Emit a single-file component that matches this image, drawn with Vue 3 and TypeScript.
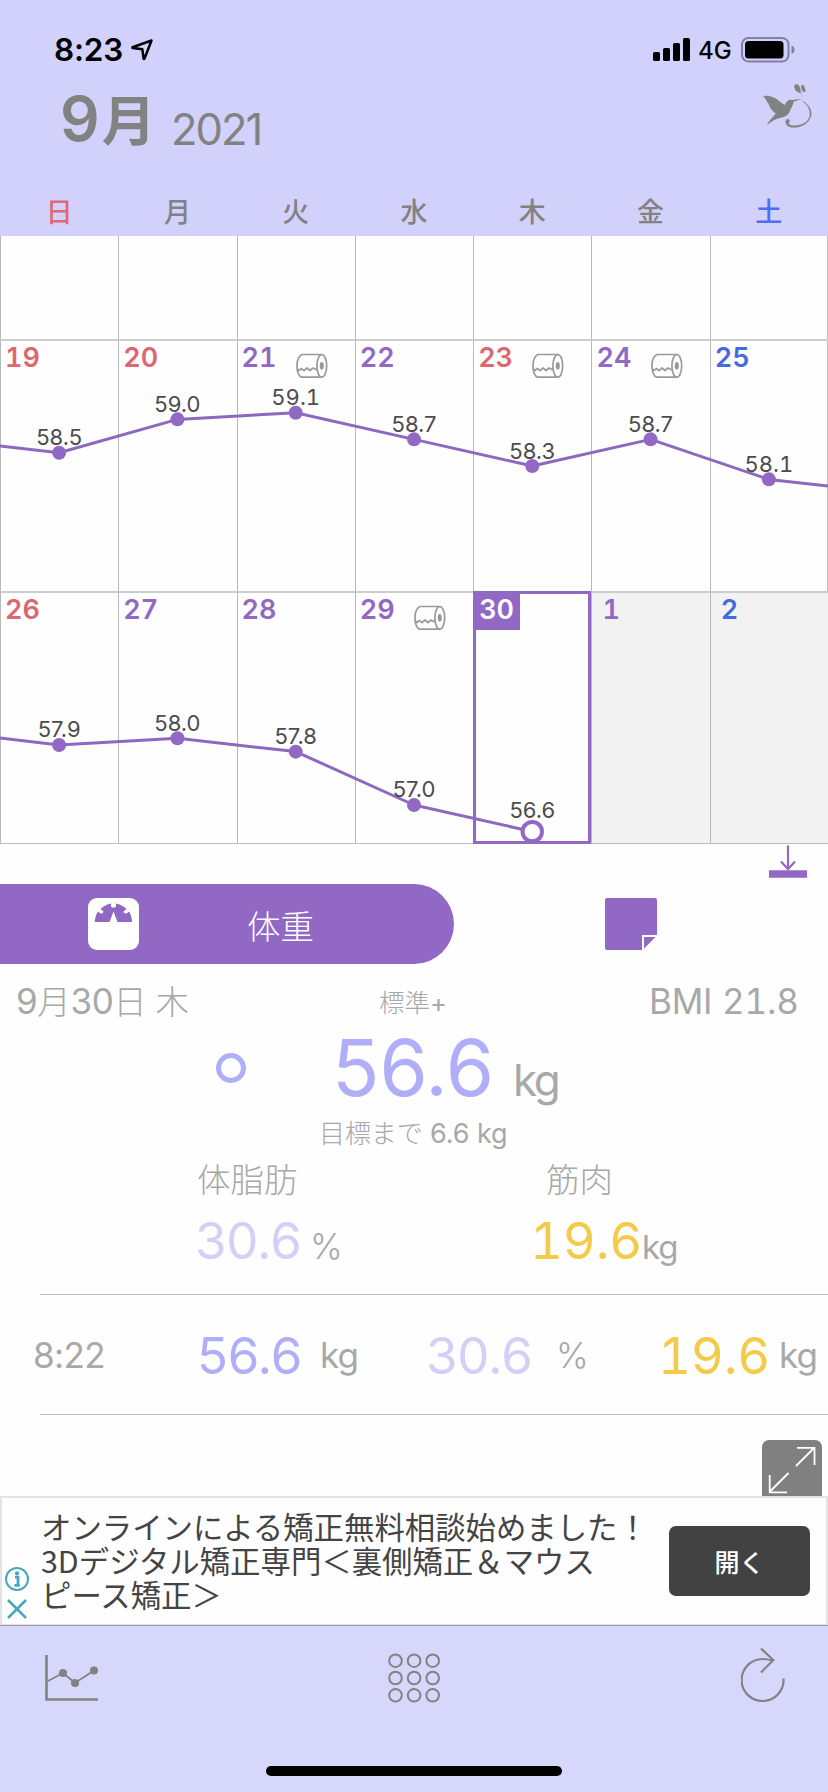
<script setup lang="ts">
interface Day {
  n: number
  tone: 'red' | 'purple' | 'blue'
  weight?: number
  roll?: boolean
  today?: boolean
  next?: boolean
}

interface Week {
  days: Day[]
  base: number
  line: string
}

const weekdays = ['日', '月', '火', '水', '木', '金', '土']
const cell = 828 / 7

const first: Day[] = [
  { n: 19, tone: 'red', weight: 58.5 },
  { n: 20, tone: 'red', weight: 59.0 },
  { n: 21, tone: 'purple', weight: 59.1, roll: true },
  { n: 22, tone: 'purple', weight: 58.7 },
  { n: 23, tone: 'red', weight: 58.3, roll: true },
  { n: 24, tone: 'purple', weight: 58.7, roll: true },
  { n: 25, tone: 'blue', weight: 58.1 },
]
const second: Day[] = [
  { n: 26, tone: 'red', weight: 57.9 },
  { n: 27, tone: 'purple', weight: 58.0 },
  { n: 28, tone: 'purple', weight: 57.8 },
  { n: 29, tone: 'purple', weight: 57.0, roll: true },
  { n: 30, tone: 'purple', weight: 56.6, today: true },
  { n: 1, tone: 'purple', next: true },
  { n: 2, tone: 'blue', next: true },
]

const px = (i: number) => cell * (i + 0.5)
const py = (weight: number, base: number) => 113.7 - (weight - base) * 66.67

function polyline(days: Day[], base: number, before: number, after?: number): string {
  const pts = days
    .map((d, i) => (d.weight === undefined ? '' : `${px(i).toFixed(1)},${py(d.weight, base).toFixed(1)}`))
    .filter(Boolean)
  pts.unshift(`0,${before}`)
  if (after !== undefined) pts.push(`828,${after}`)
  return pts.join(' ')
}

const secondBase = 58.504
const weeks: Week[] = [
  { days: first, base: 58.5, line: polyline(first, 58.5, 107, 147) },
  { days: second, base: secondBase, line: polyline(second, secondBase, 147) },
]

const dots = [0, 1, 2, 3, 4, 5, 6, 7, 8]
</script>

<template>
  <div class="screen">
    <header class="head">
      <div class="status">
        <span class="time">8:23</span>
        <svg class="loc" viewBox="0 0 24 24"><path d="M21.5 2.5 2.6 9.3Q2 9.8 2.8 10.1L12.4 11.3 13.6 20.6Q13.9 21.6 14.5 20.6Z" fill="none" stroke="#000" stroke-width="2.5" stroke-linejoin="round" /></svg>
        <svg class="signal" viewBox="0 0 37 23">
          <rect x="0" y="14" width="7" height="9" rx="1.5" /><rect x="10" y="10" width="7" height="13" rx="1.5" /><rect x="20" y="5" width="7" height="18" rx="1.5" /><rect x="30" y="0" width="7" height="23" rx="1.5" />
        </svg>
        <span class="net">4G</span>
        <svg class="battery" viewBox="0 0 54 26">
          <rect x="1" y="1" width="46.5" height="23.5" rx="6.5" fill="none" stroke="#817fa3" stroke-width="2" />
          <rect x="4" y="4" width="38.5" height="17.5" rx="3.5" />
          <path d="M50.5 8.5q3 1.2 3 4.3t-3 4.3z" fill="#817fa3" />
        </svg>
      </div>
      <div class="title">
        <span class="month">9<b>月</b></span>
        <span class="year">2021</span>
        <svg class="bird" viewBox="1048 250 152 136" fill="#828282">
          <path d="M1051 288C1068 286 1086 291 1099 303 1107 309 1112 314 1117 314 1119 304 1128 297 1140 300 1150 298 1160 297 1171 297 1160 299 1151 302 1142 305 1141 315 1136 322 1132 330 1128 344 1117 352 1103 353 1090 356 1074 365 1062 375 1069 362 1080 351 1089 340 1078 334 1071 322 1068 313 1063 306 1059 296 1051 288Z" />
          <path d="M1147 255C1157 252 1162 263 1162 278 1151 277 1142 264 1147 255ZM1167 257C1171 252 1178 271 1176 275 1169 276 1164 264 1167 257Z" stroke="#828282" stroke-width="3" />
          <path d="M1164 279 1169 291" fill="none" stroke="#a3a2bb" stroke-width="1.5" />
          <path d="M1170 304C1188 315 1199 333 1193 350 1185 374 1158 384 1135 381 1122 379 1117 370 1119 361 1121 357 1129 356 1130 361L1129 366C1123 374 1135 378 1147 377 1174 375 1190 361 1191 345 1192 328 1184 316 1170 304Z" stroke="#828282" stroke-width="1.5" />
        </svg>
      </div>
      <div class="weekdays">
        <span v-for="(w, i) in weekdays" :key="w" :class="{ sun: i === 0, sat: i === 6 }">{{ w }}</span>
      </div>
    </header>

    <section class="calendar">
      <div class="week blank"><div v-for="n in 7" :key="n" class="day" /></div>
      <div v-for="(week, wi) in weeks" :key="wi" class="week">
        <div v-for="d in week.days" :key="d.n" class="day" :class="{ next: d.next, today: d.today }">
          <span class="num" :class="d.tone">{{ d.n }}</span>
          <svg v-if="d.roll" class="roll" viewBox="0 0 32 26" fill="none" stroke="#9a9a9a" stroke-width="1.7">
            <ellipse cx="25.8" cy="12.8" rx="4.9" ry="11.3" />
            <path d="M25.8 1.5H6C2.5 3 .8 8 1 14.5Q1.5 22.5 5.5 24.1H25.8M1 15.5L3.2 17.5 5.3 15.5 8 17.7 11 15 14 17.5 17 15 21 17" stroke-linejoin="round" />
            <ellipse cx="25.8" cy="12.8" rx="1.2" ry="3" fill="#8c8c8c" />
          </svg>
        </div>
        <svg class="plot" viewBox="0 0 828 252">
          <polyline :points="week.line" fill="none" stroke="#8c69bf" stroke-width="3" stroke-linejoin="round" />
          <template v-for="(d, i) in week.days" :key="d.n">
            <template v-if="d.weight !== undefined">
              <circle v-if="d.today" :cx="px(i)" :cy="py(d.weight, week.base)" r="9.7" fill="#fff" stroke="#9168c4" stroke-width="4" />
              <circle v-else :cx="px(i)" :cy="py(d.weight, week.base)" r="7" fill="#9168c4" />
              <text :class="{ tab: d.weight.toFixed(1).includes('1') }" :x="px(i)" :y="py(d.weight, week.base) - (d.today ? 13.5 : 7.5)">{{ d.weight.toFixed(1) }}</text>
            </template>
          </template>
        </svg>
      </div>
    </section>

    <div class="fold">
      <svg viewBox="0 0 38 33" fill="none" stroke="#9168c4">
        <path d="M19 .5V24M12 16.5 19 24.2 26 16.5" stroke-width="2.2" /><path d="M0 29H38" stroke-width="7.5" />
      </svg>
    </div>

    <nav class="tabs">
      <div class="pill">
        <svg class="scale" viewBox="0 0 51 52">
          <rect width="51" height="52" rx="9" fill="#fff" />
          <path d="M6.7 24C7 19.5 8 16.5 10 13.5L12.5 15.5Q15.5 16 15.5 13.5L12.5 11Q17 6.5 23 5.5V8.5Q25.5 11 28 8.5V5.5Q34 6.5 38.5 11L35.5 13.5Q35.5 16 38.5 15.5L41 13.5Q43.8 17.5 44 24H29.5L25.5 13.5 21.5 24Z" fill="#9168c4" />
        </svg>
        <span>体重</span>
      </div>
      <svg class="note" viewBox="0 0 52 52" fill="#9168c4">
        <path d="M2 0H50Q52 0 52 2V37H37V52H2Q0 52 0 50V2Q0 0 2 0ZM39 39H50.5L39 50.5Z" />
      </svg>
    </nav>

    <section class="summary">
      <div class="line info">
        <span class="date">9<i>月</i>30<i>日 木</i></span>
        <span class="grade">標準<em>+</em></span>
        <span class="bmi">BMI <span class="tab">21.8</span></span>
      </div>
      <div class="line main">
        <span class="ring" />
        <span class="big">56.6</span>
        <span class="unit">kg</span>
      </div>
      <div class="goal"><span>目標まで</span> 6.6 kg</div>
      <div class="line labels"><span class="fat">体脂肪</span><span class="muscle">筋肉</span></div>
      <div class="line body">
        <span class="v1 pale">30.6</span><span class="u1">%</span>
        <span class="v2 gold tab">19.6</span><span class="u2">kg</span>
      </div>
    </section>

    <section class="record">
      <span class="at">8:22</span>
      <span class="r1 lilac">56.6</span><span class="ru1">kg</span>
      <span class="r2 pale">30.6</span><span class="ru2">%</span>
      <span class="r3 gold tab">19.6</span><span class="ru3">kg</span>
    </section>

    <div class="expand">
      <svg viewBox="0 0 60 56" fill="none" stroke="#fff" stroke-width="1.8">
        <rect width="60" height="64" rx="7" fill="#808080" stroke="none" />
        <path d="M34 26 52.5 7.5M35 7.8H52.5V25M26.5 33 8 51.5M7.7 35V52.3H25" />
      </svg>
    </div>

    <aside class="ad">
      <div class="marks">
        <svg viewBox="0 0 24 56" fill="none" stroke="#48a6be" stroke-width="2">
          <circle cx="12" cy="13" r="11" />
          <path d="M10 11.2H13V19M9.5 19.3H14.8" stroke-width="2.8" /><circle cx="12" cy="7.3" r="1.1" />
          <path d="M3 34 21 52M21 34 3 52" stroke-width="2.5" />
        </svg>
      </div>
      <p>オンラインによる矯正無料相談始めました！<br>3Dデジタル矯正専門＜裏側矯正＆マウス<br>ピース矯正＞</p>
      <button type="button">開く</button>
    </aside>

    <footer class="foot">
      <svg class="ic-chart" viewBox="0 0 54 48" fill="none" stroke="#828282" stroke-width="2.2">
        <path d="M1.5 1V45.5H53" stroke-width="2.6" /><path d="M2 27.5 18 19 30 29 49 16.5" stroke-width="1.8" />
        <g fill="#828282" stroke="none"><circle cx="18" cy="19" r="4" /><circle cx="30" cy="29" r="4" /><circle cx="49" cy="16.5" r="4" /></g>
      </svg>
      <svg class="ic-grid" viewBox="0 0 54 50" fill="none" stroke="#828282" stroke-width="2">
        <circle v-for="k in dots" :key="k" :cx="8.5 + (k % 3) * 18.6" :cy="7.7 + Math.floor(k / 3) * 17.3" r="6.3" />
      </svg>
      <svg class="ic-refresh" viewBox="0 0 44 56" fill="none" stroke="#828282" stroke-width="2.2">
        <path d="M42.5 31.5A21 21 0 1 1 21.5 12Q26 12 31.5 13.5M20 1.5 32.3 13 20 25.5" />
      </svg>
      <div class="home" />
    </footer>
  </div>
</template>

<style>
html,
body {
  background: #fefefe;
}
</style>

<style scoped>
.screen {
  width: 828px;
  height: 1792px;
  overflow: hidden;
  display: flex;
  flex-direction: column;
  background: #fefefe;
  font-family: Inter, "Noto Sans CJK JP", sans-serif;
  color: #a8a8a8;
}
.screen > * {
  flex: none;
}
svg {
  display: block;
  flex: none;
}
span,
button,
p {
  flex: none;
  white-space: nowrap;
}
i,
em {
  font-style: normal;
}
.tab {
  font-variant-numeric: tabular-nums;
}

.head {
  height: 236px;
  background: #d2d1fb;
  color: #828282;
}
.status {
  height: 77px;
  box-sizing: border-box;
  padding: 22px 34px 0 54px;
  display: flex;
  align-items: center;
  color: #000;
}
.time {
  width: 76px;
  font-size: 31.5px;
  font-weight: 600;
  letter-spacing: -0.2px;
}
.loc {
  width: 24px;
  height: 24px;
  margin-right: auto;
}
.signal {
  width: 37px;
  height: 23px;
  margin-right: 8px;
}
.net {
  width: 43px;
  font-size: 24px;
  font-weight: 500;
  margin-top: 2px;
}
.battery {
  width: 54px;
  height: 26px;
  margin-right: -1px;
}
.title {
  height: 103px;
  display: flex;
  align-items: flex-start;
  padding-left: 60px;
}
.month {
  width: 111px;
  font-size: 62px;
  font-weight: 600;
  line-height: 84px;
}
.month b {
  font-size: 54px;
  font-weight: 700;
  margin-left: 2px;
}
.year {
  width: 591px;
  font-size: 43.5px;
  font-weight: 400;
  line-height: 104px;
  letter-spacing: -2px;
}
.bird {
  width: 51px;
  height: 46px;
  margin-top: 6px;
}
.weekdays {
  display: grid;
  grid-template-columns: repeat(7, 1fr);
  text-align: center;
  font-size: 27px;
  font-weight: 500;
  line-height: 66px;
}
.sun {
  color: #df6a74;
}
.sat {
  color: #4a6ff0;
}

.calendar {
  height: 608px;
}
.week {
  position: relative;
  height: 252px;
  display: grid;
  grid-template-columns: repeat(7, 1fr);
  box-shadow: inset -1px 0 #bdbdbd;
}
.week.blank {
  height: 103px;
}
.week:last-child {
  height: 253px;
}
.day {
  box-sizing: border-box;
  border-left: 1px solid #b9b9bb;
  border-top: 2px solid #cdcdcd;
  display: flex;
  align-items: flex-start;
  justify-content: space-between;
}
.blank .day {
  border-top: 0;
}
.week:last-child .day {
  border-bottom: 1px solid #bdbdbd;
}
.num {
  padding-left: 4px;
  font-size: 27px;
  font-weight: 600;
  line-height: 33px;
  font-variant-numeric: tabular-nums;
}
.next {
  background: #f2f2f2;
}
.next .num {
  padding-left: 10px;
}
.red {
  color: #dd6670;
}
.purple {
  color: #9168c4;
}
.blue {
  color: #446ae2;
}
.today {
  border: 3px solid #9168c4 !important;
}
.today .num {
  width: 44px;
  height: 36px;
  padding-left: 3px;
  box-sizing: border-box;
  color: #fff;
  background: #9168c4;
  line-height: 31px;
}
.roll {
  width: 32px;
  height: 26px;
  margin: 12px 27px 0 0;
}
.plot {
  position: absolute;
  left: 0;
  top: 0;
  width: 828px;
  height: 252px;
}
.plot text {
  font-size: 22px;
  fill: #4c4c4c;
  text-anchor: middle;
}

.fold {
  height: 40px;
  padding-left: 769px;
}
.fold svg {
  width: 38px;
  height: 33px;
  margin-top: 1px;
}
.tabs {
  height: 80px;
  display: flex;
  align-items: center;
}
.pill {
  width: 454px;
  height: 80px;
  border-radius: 0 40px 40px 0;
  background: #9168c4;
  display: flex;
  align-items: center;
  box-sizing: border-box;
  padding-left: 88px;
}
.scale {
  width: 51px;
  height: 52px;
}
.pill span {
  margin-left: 108px;
  color: #fff;
  font-size: 33.5px;
  font-weight: 300;
}
.note {
  width: 52px;
  height: 52px;
  margin-left: 151px;
}

.summary {
  height: 330px;
  box-sizing: border-box;
}
.line {
  display: flex;
}
.info {
  height: 60px;
  padding-top: 14px;
  box-sizing: border-box;
  line-height: 46px;
  font-size: 35px;
}
.date {
  width: 363px;
  padding-left: 16px;
  letter-spacing: -0.4px;
}
.date i {
  font-size: 33.5px;
  font-weight: 300;
}
.grade {
  width: 270px;
  font-size: 25.5px;
  font-weight: 300;
  line-height: 49px;
}
.grade em {
  font-weight: 400;
}
.bmi {
  letter-spacing: -0.2px;
}
.main {
  height: 88px;
  align-items: center;
}
.ring {
  width: 20px;
  height: 20px;
  border: 5px solid #b0aef8;
  border-radius: 50%;
  margin: 0 86px 0 216px;
}
.big {
  width: 181px;
  font-size: 78px;
  line-height: 88px;
  color: #b0aef8;
}
.unit {
  font-size: 44px;
  line-height: 60px;
  margin-top: 24px;
  letter-spacing: -2.5px;
}
.goal {
  height: 42px;
  line-height: 44px;
  margin-left: 319px;
  font-size: 27px;
  letter-spacing: -0.1px;
}
.goal span {
  font-size: 26px;
  font-weight: 300;
}
.labels {
  height: 50px;
  line-height: 52px;
  font-size: 33.5px;
  font-weight: 300;
}
.fat {
  width: 349px;
  padding-left: 197px;
}
.body {
  height: 74px;
  line-height: 74px;
}
.v1,
.v2,
.r1,
.r2,
.r3 {
  font-size: 51px;
  letter-spacing: -0.2px;
}
.v1 {
  margin-left: 195px;
  width: 115px;
}
.u1 {
  width: 220px;
  font-size: 35px;
  line-height: 84px;
  font-weight: 300;
}
.v2 {
  width: 112px;
}
.u2 {
  font-size: 33px;
  line-height: 86px;
  letter-spacing: -1px;
}
.pale {
  color: #d3d0f8;
}
.gold {
  color: #f4cb48;
}
.lilac {
  color: #b0aef8;
}

.record {
  margin-left: 40px;
  height: 119px;
  border-top: 1px solid #c2c2c2;
  border-bottom: 1px solid #c2c2c2;
  display: flex;
  line-height: 121px;
}
.at {
  margin-left: -7px;
  width: 164px;
  font-size: 35px;
  letter-spacing: -0.6px;
}
.r1 {
  width: 123px;
}
.ru1,
.ru2,
.ru3 {
  font-size: 35px;
  letter-spacing: -0.8px;
}
.ru1 {
  width: 106px;
}
.r2 {
  width: 130px;
}
.ru2 {
  width: 102px;
  font-weight: 300;
}
.r3 {
  width: 121px;
}

.expand {
  margin-top: 25px;
  height: 56px;
  padding-left: 762px;
}
.expand svg {
  width: 60px;
  height: 56px;
}
.ad {
  height: 129px;
  box-sizing: border-box;
  border: 2px solid #e4e4e4;
  border-bottom-width: 1px;
  background: #fefefe;
  display: flex;
  font-family: "Noto Sans CJK JP", sans-serif;
}
.marks {
  width: 39px;
  padding: 68px 0 0 3px;
  box-sizing: border-box;
}
.marks svg {
  width: 24px;
  height: 56px;
}
.ad p {
  margin: 11px 0 0;
  width: 628px;
  font-size: 30.4px;
  line-height: 34px;
  font-weight: 400;
  color: #444;
}
.ad button {
  width: 141px;
  height: 70px;
  margin-top: 28px;
  padding: 0;
  border: 0;
  border-radius: 7px;
  background: #424242;
  color: #fff;
  font: 500 25px "Noto Sans CJK JP", sans-serif;
}
.foot {
  height: 167px;
  border-top: 1px solid #9a99a8;
  box-sizing: border-box;
  background: #d7d7fb;
  display: grid;
  grid-template-columns: 387px 354px 1fr;
  grid-template-rows: 140px 10px;
}
.ic-chart {
  width: 54px;
  height: 48px;
  margin: 28px 0 0 45px;
}
.ic-grid {
  width: 54px;
  height: 50px;
  margin-top: 27px;
}
.ic-refresh {
  width: 44px;
  height: 56px;
  margin-top: 21px;
}
.home {
  grid-column: 1 / -1;
  width: 296px;
  height: 10px;
  margin-left: 266px;
  border-radius: 5px;
  background: #000;
}
</style>
